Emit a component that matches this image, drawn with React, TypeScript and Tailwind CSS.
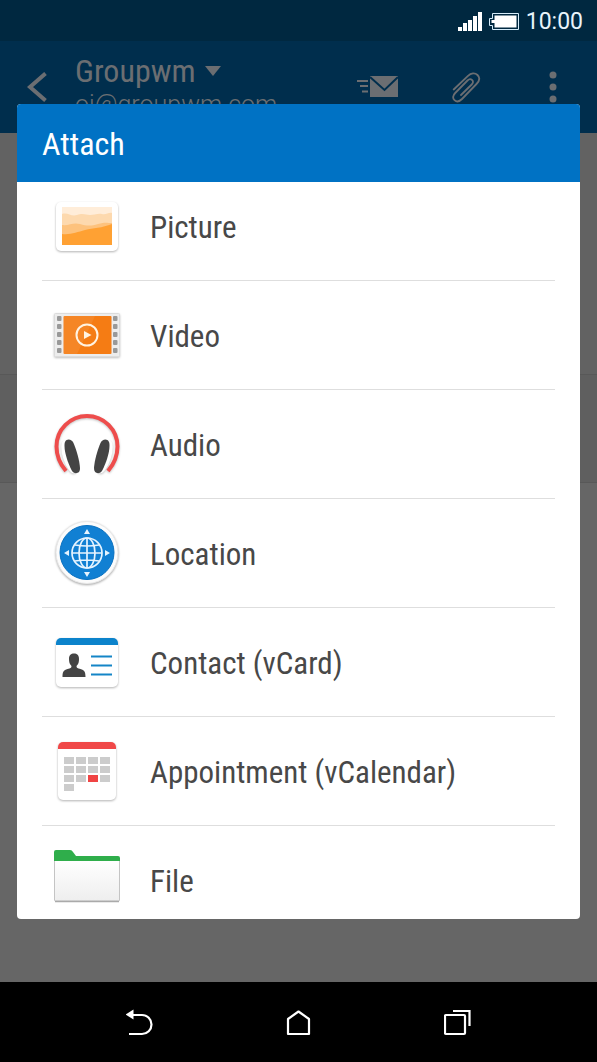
import React from "react";

interface IconProps {
  children: React.ReactNode;
}

const IconBox = ({ children }: IconProps) => (
  <svg viewBox="0 0 72 72" className="h-[72px] w-[72px] shrink-0 overflow-visible" aria-hidden="true">
    {children}
  </svg>
);

const PictureIcon = () => (
  <IconBox>
    <rect x="5" y="12" width="62" height="49" rx="5" fill="#fff" className="drop-shadow-[0_1px_1px_rgba(0,0,0,0.3)]" />
    <rect x="11" y="17" width="50" height="38" fill="#ffedd9" />
    <path d="M11 24c6-2 9 3 15 1s9 0 13 0 8-2 12-1 7-2 10-1v32H11z" fill="#fdd9ae" />
    <path d="M11 35c7 1 11-3 18-1s11 2 18 0 9-1 14-1v22H11z" fill="#fdc27d" />
    <path d="M11 44c9 1 15-2 23-4s17-2 27-6v21H11z" fill="#ffa133" />
  </IconBox>
);

const VideoIcon = () => (
  <IconBox>
    <rect x="3.500" y="14.500" width="65" height="43" rx="1" fill="#ededed" stroke="#dcdcdc" className="drop-shadow-[0_1px_1px_rgba(0,0,0,0.25)]" />
    {[17, 25, 33, 41, 49].map((y) => (
      <g key={y} fill="#999">
        <rect x="6" y={y} width="4.500" height="5" rx="1" />
        <rect x="62" y={y} width="4.500" height="5" rx="1" />
      </g>
    ))}
    <rect x="12.500" y="17" width="48" height="38" rx="1" fill="#f57c14" />
    <path d="M12.500 17H44L26 55H12.500z" fill="#fff" opacity=".08" />
    <circle cx="36" cy="36" r="10.500" fill="none" stroke="#fff3e2" strokeWidth="2" />
    <path d="M33 32v8l7.500-4z" fill="#fff3e2" />
  </IconBox>
);

const AudioIcon = () => (
  <IconBox>
    <g className="drop-shadow-[0_1px_1px_rgba(0,0,0,0.25)]">
      <ellipse cx="18" cy="49" rx="6" ry="17" transform="rotate(-18 18 49)" fill="#fff" />
      <ellipse cx="54" cy="49" rx="6" ry="17" transform="rotate(18 54 49)" fill="#fff" />
      <path
        d="M15 63C9 56 5.500 48 5.500 38.500a30.500 30.500 0 0 1 61 0C66.500 48 63 56 57 63"
        fill="none"
        stroke="#ee4d4c"
        strokeWidth="4"
      />
    </g>
    <path d="M14 34c2-4 7-2.500 8.500 1 3 7 6 17 6.500 25 .3 6-6 7-8.500 2-3.500-7-7-17-7-24 0-1 0-3 .5-4z" fill="#444" />
    <path d="M58 34c-2-4-7-2.500-8.500 1-3 7-6 17-6.500 25-.3 6 6 7 8.500 2 3.500-7 7-17 7-24 0-1 0-3-.5-4z" fill="#444" />
  </IconBox>
);

const LocationIcon = () => (
  <IconBox>
    <circle cx="36" cy="35.500" r="31" fill="#fcfcfc" stroke="#e8e8e8" className="drop-shadow-[0_1px_1px_rgba(0,0,0,0.35)]" />
    <circle cx="36" cy="35.500" r="27" fill="#1180d3" stroke="#0870c0" />
    <g fill="none" stroke="#e6f4ff" strokeWidth="1.700">
      <circle cx="36" cy="36" r="15" />
      <ellipse cx="36" cy="36" rx="8" ry="15" />
      <path d="M36 21v30M21 36h30M24 28q12 2 24 0M24 44q12-2 24 0" />
    </g>
    <path d="M36 12l3 5h-6zM36 60l3-5h-6zM13 36l5-3v6zM59 36l-5-3v6z" fill="#e6f4ff" />
  </IconBox>
);

const ContactIcon = () => (
  <IconBox>
    <rect x="5" y="12" width="62" height="49" rx="5" fill="#fff" className="drop-shadow-[0_1px_1px_rgba(0,0,0,0.3)]" />
    <path d="M5 19v-2a5 5 0 0 1 5-5h52a5 5 0 0 1 5 5v2z" fill="#0c83cb" />
    <path d="M11.500 51c0-5 1-7 5-8 3-1 4-1 4-3-2-2-2.500-4-2.500-7 0-4 2-5.500 5-5.500s5 1.500 5 5.500c0 3-.5 5-2.500 7 0 2 1 2 4 3 4 1 5 3 5 8z" fill="#444" />
    <path d="M40 30.500h21M40 39.500h21M40 48.500h21" stroke="#1485c7" strokeWidth="2" />
  </IconBox>
);

const cells = [0, 1, 2, 3, 4, 5, 6, 7, 8, 9, 10, 11, 12];

const CalendarIcon = () => (
  <IconBox>
    <rect x="7" y="7" width="58" height="58" rx="5" fill="#fff" className="drop-shadow-[0_1px_1px_rgba(0,0,0,0.3)]" />
    <path d="M7 14v-2a5 5 0 0 1 5-5h48a5 5 0 0 1 5 5v2z" fill="#f04848" />
    {cells.map((i) => (
      <rect
        key={i}
        x={13 + (i % 4) * 12}
        y={22 + Math.floor(i / 4) * 9}
        width="10"
        height="7"
        fill={i === 10 ? "#f04444" : "#ccc"}
      />
    ))}
  </IconBox>
);

const FileIcon = () => (
  <IconBox>
    <defs>
      <linearGradient id="folder" x1="0" y1="0" x2="0" y2="1">
        <stop offset="0" stopColor="#fff" />
        <stop offset="1" stopColor="#eee" />
      </linearGradient>
    </defs>
    <rect x="3.500" y="16" width="65" height="41" rx="1" fill="url(#folder)" stroke="#c4c4c4" />
    <path d="M4 57.500h64" stroke="#aaa" strokeWidth="1.500" />
    <path d="M3 17V8q0-2 2-2h14q2 0 3 2l3 4h42q2 0 2 2v3z" fill="#2fae4b" />
  </IconBox>
);

const options = [
  { label: "Picture", Icon: PictureIcon },
  { label: "Video", Icon: VideoIcon },
  { label: "Audio", Icon: AudioIcon },
  { label: "Location", Icon: LocationIcon },
  { label: "Contact (vCard)", Icon: ContactIcon },
  { label: "Appointment (vCalendar)", Icon: CalendarIcon },
  { label: "File", Icon: FileIcon },
];

const StatusBar = () => (
  <div className="flex h-[41px] items-center justify-end bg-[#002840] pt-[2px] pr-[14px]">
    <svg width="24" height="19" viewBox="0 0 24 19" fill="#fff" aria-hidden="true">
      <path d="M0 15h4v4H0zM5 11h4v8H5zM10 8h4v11h-4zM15 4h4v15h-4zM20 0h4v19h-4z" />
    </svg>
    <svg width="30" height="17" viewBox="0 0 30 17" className="ml-[7px]" aria-hidden="true">
      <path d="M3.500 .5h26v16h-26v-4h-3v-7h3z" fill="none" stroke="#d5ecfa" />
      <path d="M5.500 2.500h22v12h-22V10H2.500V7h3z" fill="#fff" />
    </svg>
    <span className="ml-[7px] text-[23px] leading-[28px] text-[#e8f4fb]">10:00</span>
  </div>
);

const MailHeader = () => (
  <header className="flex h-[92px] bg-[#002e4d] pl-[27px] text-[#6b6e72]">
    <button aria-label="Back" className="mt-[31px] h-[30px] w-[20px]">
      <svg width="20" height="30" viewBox="0 0 20 30" fill="none" stroke="currentColor" strokeWidth="4">
        <path d="M18.500 1.500L3 15l15.500 13.500" />
      </svg>
    </button>
    <div className="ml-[28px] flex-1 pt-[11px]">
      <button className="flex items-center gap-[9px] font-['Roboto_Condensed','Roboto',sans-serif] text-[32px] leading-[38px]">
        Groupwm
        <svg width="16" height="10" viewBox="0 0 16 10" fill="currentColor">
          <path d="M0 0h16L8 10z" />
        </svg>
      </button>
      <p className="text-[25px] leading-[30px] font-light">oi@groupwm.com</p>
    </div>
    <button aria-label="Send" className="mt-[35px] h-[22px] w-[42px]">
      <svg width="42" height="22" viewBox="0 0 42 22">
        <path d="M0 5h11M3 10h8M5 15.500h6" stroke="currentColor" strokeWidth="2" />
        <path d="M13 0h28v21H13z" fill="currentColor" />
        <path d="M13 1l14.500 13L41 1" fill="none" stroke="#002e4d" strokeWidth="2" />
      </svg>
    </button>
    <button aria-label="Attach" className="ml-[51px] mt-[30px] h-[32px] w-[31px]">
      <svg width="31" height="32" viewBox="0 0 31 32" fill="none" stroke="currentColor" strokeWidth="1.800" strokeLinecap="round">
        <path d="M3.700 18.500L18 4.800c3-3 7-3.300 9.500-.8s2 6-1 9L12 28c-2.500 2.500-5.500 3-7.500 1.200s-1.800-4.700.7-7.200L17.500 9.500c1.500-1.500 3.500-1.500 4.700-.3s1 2.800-.5 4.300L11 24" />
      </svg>
    </button>
    <button aria-label="More" className="ml-[67px] mr-[39px] mt-[30px] h-[32px] w-[10px]">
      <svg width="10" height="32" viewBox="0 0 10 32" fill="currentColor">
        <circle cx="5" cy="4" r="3.500" />
        <circle cx="5" cy="16" r="3.500" />
        <circle cx="5" cy="28" r="3.500" />
      </svg>
    </button>
  </header>
);

const NavBar = () => (
  <nav className="flex h-[80px] items-center bg-black px-[60px] pt-[2px] text-white">
    <button aria-label="Back" className="flex flex-1 justify-center">
      <svg width="28" height="28" viewBox="0 0 28 28" fill="none" stroke="currentColor" strokeWidth="2.200">
        <path d="M7 6h9a9.500 9.500 0 0 1 0 19H3" />
        <path d="M-.5 5.500l8-5v10z" fill="currentColor" stroke="none" />
      </svg>
    </button>
    <button aria-label="Home" className="flex flex-1 justify-center">
      <svg width="28" height="28" viewBox="0 0 28 28" fill="none" stroke="currentColor" strokeWidth="2.200">
        <path d="M3 25V10l10.500-7.500L24 10v15z" strokeLinejoin="round" />
      </svg>
    </button>
    <button aria-label="Recent apps" className="flex flex-1 justify-center">
      <svg width="28" height="28" viewBox="0 0 28 28" fill="none" stroke="currentColor" strokeWidth="2.200">
        <rect x="1" y="6" width="20" height="19" rx="1" />
        <path d="M9 2h16.500v15" />
      </svg>
    </button>
  </nav>
);

const AttachDialog = () => (
  <div className="absolute inset-x-0 top-[41px] bottom-[80px] flex items-center px-[17px]">
    <div role="dialog" aria-labelledby="attach-title" className="w-full overflow-hidden rounded-[4px] bg-white font-['Roboto_Condensed','Roboto',sans-serif]">
      <h2 id="attach-title" className="bg-[#0072c4] px-[25px] pt-[21px] pb-[19px] text-[32px] leading-[38px] text-white">
        Attach
      </h2>
      <div className="h-[737px] overflow-hidden px-[25px]">
        <ul className="-mt-[10px]">
          {options.map(({ label, Icon }) => (
            <li key={label} className="border-b border-[#dedede] last:border-b-0">
              <button className="flex h-[108px] w-full items-center gap-[27px] pl-[9px] text-left text-[31px] leading-[38px] whitespace-nowrap text-[#484848]">
                <Icon />
                <span className="pt-[3px]">{label}</span>
              </button>
            </li>
          ))}
        </ul>
      </div>
    </div>
  </div>
);

const App = () => {
  return (
    <div className="relative flex min-h-screen flex-col bg-[#666] font-['Roboto',sans-serif]">
      <StatusBar />
      <MailHeader />
      <main className="flex flex-1 flex-col">
        <div className="h-[241px] bg-[#626262]" />
        <div className="h-[109px] border-y border-[#585858] bg-[#5f5f5f]" />
      </main>
      <NavBar />
      <AttachDialog />
    </div>
  );
};

export default App;
